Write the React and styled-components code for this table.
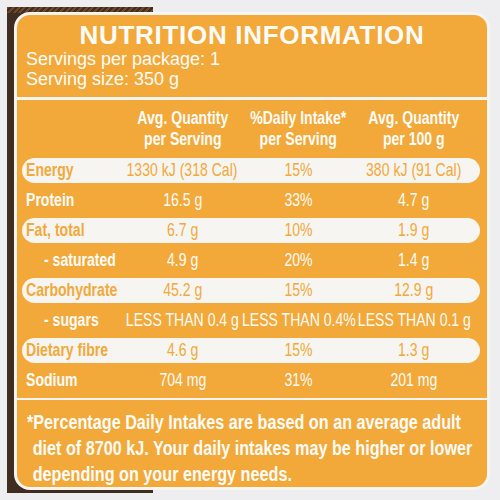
import React from 'react';
import styled, { createGlobalStyle } from 'styled-components';

const ORANGE = '#f3a93a';
const CREAM = '#f6f5f2';
const SANS = '"Liberation Sans", Arial, sans-serif';

const Global = createGlobalStyle`
  html, body {
    margin: 0;
    padding: 0;
    background: #eeeef1;
  }
`;

const Backing = styled.div`
  margin: 7px;
  width: 486px;
  height: 486px;
  box-sizing: border-box;
  padding: 5px 3px 3px 7px;
  background:
    repeating-linear-gradient(135deg, rgba(170, 105, 50, 0.45) 0 2px, transparent 2px 4px) 0 0 / 146px 6px no-repeat,
    linear-gradient(to right, #3f2d22 0 146px, transparent 146px);
`;

const Panel = styled.div`
  box-sizing: border-box;
  width: 476px;
  height: 478px;
  border: 3px solid ${CREAM};
  border-radius: 16px;
  background: ${ORANGE};
  color: #fdfcf8;
  overflow: hidden;
  display: flex;
  flex-direction: column;
  font-family: ${SANS};
`;

const Top = styled.div`
  padding: 6px 0 8px 9px;
`;

const Title = styled.h1`
  margin: 0 0 0 -9px;
  font-size: 26px;
  line-height: 28px;
  font-weight: 700;
  letter-spacing: 0.7px;
  text-align: center;
`;

const Serving = styled.div`
  font-size: 18px;
  line-height: 20px;
`;

const Divider = styled.div`
  height: 3px;
  background: ${CREAM};
`;

/* condensed type: Arial squeezed the way Arial Narrow is */
const Squeeze = styled.span`
  display: inline-block;
  white-space: nowrap;
  transform: scaleX(${(p) => p.$k || 0.76});
  transform-origin: ${(p) => p.$o || 'center'};
`;

const Table = styled.div`
  display: flex;
  flex-direction: column;
  gap: 5px;
  padding: 7px 7px 5px 5px;
  font-size: 18.5px;
`;

const Grid = styled.div`
  display: grid;
  grid-template-columns: 98px 117px 115px 116px;
  align-items: center;
  padding-left: 4px;
  padding-right: 8px;
`;

const Head = styled(Grid)`
  margin-bottom: 4px;
  font-weight: 700;
  line-height: 21px;
`;

const Row = styled(Grid)`
  height: 25px;
  border-radius: 13px;
  background: ${(p) => (p.$hl ? CREAM : 'transparent')};
  color: ${(p) => (p.$hl ? ORANGE : '#fdfcf8')};
`;

const Label = styled.span`
  display: flex;
  font-weight: 700;
  padding-left: ${(p) => (p.$sub ? '18px' : '0')};
`;

const Cell = styled.span`
  display: flex;
  justify-content: center;
  text-align: center;
`;

const Note = styled.div`
  padding: 9px 0 0 10px;
  font-weight: 700;
  font-size: 20px;
  line-height: 26px;
`;

const NoteText = styled(Squeeze)`
  padding-left: 7px;
  text-indent: -7px;
`;

const rows = [
  ['Energy', '1330 kJ (318 Cal)', '15%', '380 kJ (91 Cal)', true],
  ['Protein', '16.5 g', '33%', '4.7 g'],
  ['Fat, total', '6.7 g', '10%', '1.9 g', true],
  ['- saturated', '4.9 g', '20%', '1.4 g', false, true],
  ['Carbohydrate', '45.2 g', '15%', '12.9 g', true],
  ['- sugars', 'LESS THAN 0.4 g', 'LESS THAN 0.4%', 'LESS THAN 0.1 g', false, true],
  ['Dietary fibre', '4.6 g', '15%', '1.3 g', true],
  ['Sodium', '704 mg', '31%', '201 mg'],
];

export default function App() {
  return (
    <>
      <Global />
      <Backing>
        <Panel>
          <Top>
            <Title>NUTRITION INFORMATION</Title>
            <Serving>Servings per package: 1</Serving>
            <Serving>Serving size: 350 g</Serving>
          </Top>
          <Divider />
          <Table>
            <Head>
              <span />
              <Cell><Squeeze>Avg. Quantity<br />per Serving</Squeeze></Cell>
              <Cell><Squeeze>%Daily Intake*<br />per Serving</Squeeze></Cell>
              <Cell><Squeeze>Avg. Quantity<br />per 100 g</Squeeze></Cell>
            </Head>
            {rows.map(([name, a, b, c, hl, sub]) => (
              <Row key={name} $hl={hl}>
                <Label $sub={sub}><Squeeze $o="left">{name}</Squeeze></Label>
                <Cell><Squeeze>{a}</Squeeze></Cell>
                <Cell><Squeeze>{b}</Squeeze></Cell>
                <Cell><Squeeze>{c}</Squeeze></Cell>
              </Row>
            ))}
          </Table>
          <Divider />
          <Note>
            <NoteText $o="left" $k={0.81}>
              *Percentage Daily Intakes are based on an average adult<br />
              diet of 8700 kJ. Your daily intakes may be higher or lower<br />
              depending on your energy needs.
            </NoteText>
          </Note>
        </Panel>
      </Backing>
    </>
  );
}
